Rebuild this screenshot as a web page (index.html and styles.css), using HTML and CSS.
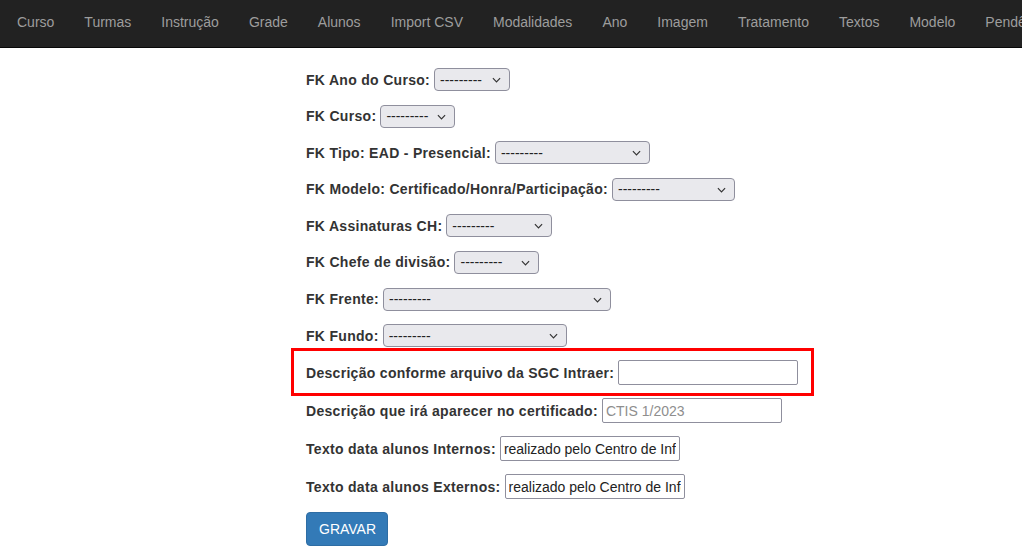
FILE: index.html
```html
<!DOCTYPE html>
<html lang="pt-BR">
<head>
<meta charset="utf-8">
<title>Cadastro</title>
<link rel="stylesheet" href="styles.css">
</head>
<body>
<nav class="navbar">
  <ul class="nav">
    <li><a href="#">Curso</a></li>
    <li><a href="#">Turmas</a></li>
    <li><a href="#">Instrução</a></li>
    <li><a href="#">Grade</a></li>
    <li><a href="#">Alunos</a></li>
    <li><a href="#">Import CSV</a></li>
    <li><a href="#">Modalidades</a></li>
    <li><a href="#">Ano</a></li>
    <li><a href="#">Imagem</a></li>
    <li><a href="#">Tratamento</a></li>
    <li><a href="#">Textos</a></li>
    <li><a href="#">Modelo</a></li>
    <li><a href="#">Pendências</a></li>
  </ul>
</nav>

<form class="form">
  <div class="row"><label>FK Ano do Curso:</label><span class="sel w76"><select><option>---------</option></select><svg class="chev" viewBox="0 0 10 6"><path d="M1 1 L5 5 L9 1"/></svg></span></div>
  <div class="row"><label>FK Curso:</label><span class="sel w75"><select><option>---------</option></select><svg class="chev" viewBox="0 0 10 6"><path d="M1 1 L5 5 L9 1"/></svg></span></div>
  <div class="row"><label>FK Tipo: EAD - Presencial:</label><span class="sel w155"><select><option>---------</option></select><svg class="chev" viewBox="0 0 10 6"><path d="M1 1 L5 5 L9 1"/></svg></span></div>
  <div class="row"><label>FK Modelo: Certificado/Honra/Participação:</label><span class="sel w123"><select><option>---------</option></select><svg class="chev" viewBox="0 0 10 6"><path d="M1 1 L5 5 L9 1"/></svg></span></div>
  <div class="row"><label>FK Assinaturas CH:</label><span class="sel w106"><select><option>---------</option></select><svg class="chev" viewBox="0 0 10 6"><path d="M1 1 L5 5 L9 1"/></svg></span></div>
  <div class="row"><label>FK Chefe de divisão:</label><span class="sel w85"><select><option>---------</option></select><svg class="chev" viewBox="0 0 10 6"><path d="M1 1 L5 5 L9 1"/></svg></span></div>
  <div class="row"><label>FK Frente:</label><span class="sel w228"><select><option>---------</option></select><svg class="chev" viewBox="0 0 10 6"><path d="M1 1 L5 5 L9 1"/></svg></span></div>
  <div class="row"><label>FK Fundo:</label><span class="sel w184"><select><option>---------</option></select><svg class="chev" viewBox="0 0 10 6"><path d="M1 1 L5 5 L9 1"/></svg></span></div>
  <div class="row trow highlight"><label>Descrição conforme arquivo da SGC Intraer:</label><input type="text" class="txt"></div>
  <div class="row trow"><label>Descrição que irá aparecer no certificado:</label><input type="text" class="txt" placeholder="CTIS 1/2023"></div>
  <div class="row trow"><label>Texto data alunos Internos:</label><input type="text" class="txt" value="realizado pelo Centro de Informática"></div>
  <div class="row trow"><label>Texto data alunos Externos:</label><input type="text" class="txt" value="realizado pelo Centro de Informática"></div>
  <div class="actions"><button type="button" class="btn">GRAVAR</button></div>
</form>
</body>
</html>
```

FILE: styles.css
```css
* { box-sizing: border-box; }
html, body { margin: 0; padding: 0; }
body {
  font-family: "Liberation Sans", Arial, Helvetica, sans-serif;
  font-size: 14px;
  line-height: 20px;
  color: #333;
  background: #fff;
  overflow: hidden;
}
.navbar {
  background: #222;
  border-bottom: 1px solid #080808;
  height: 48px;
  overflow: hidden;
}
.nav {
  list-style: none;
  margin: 0;
  padding: 0 0 0 2px;
  display: flex;
  white-space: nowrap;
}
.nav a {
  display: block;
  padding: 12px 15px;
  color: #9d9d9d;
  text-decoration: none;
  line-height: 20px;
}
.form {
  margin: 0;
  padding: 18px 0 0 306px;
}
.row {
  display: flex;
  align-items: center;
  gap: 4px;
  height: 27px;
  margin-bottom: 9.6px;
}
.trow { height: 28.4px; }
label {
  font-weight: bold;
  color: #333;
  white-space: nowrap;
  letter-spacing: 0.3px;
}
.sel {
  position: relative;
  display: inline-block;
  height: 23px;
}
.sel select {
  -webkit-appearance: none;
  appearance: none;
  width: 100%;
  height: 23px;
  margin: 0;
  padding: 0 20px 0 5px;
  font-family: inherit;
  font-size: 14px;
  color: #222;
  background: #e9e9ed;
  border: 1px solid #8f8f9d;
  border-radius: 4px;
}
.chev {
  position: absolute;
  right: 9px;
  top: 9px;
  width: 9px;
  height: 6px;
  fill: none;
  stroke: #333;
  stroke-width: 1.3;
}
.w76 { width: 76px; }
.w75 { width: 75px; }
.w155 { width: 155px; }
.w123 { width: 123px; }
.w106 { width: 106px; }
.w85 { width: 85px; }
.w228 { width: 228px; }
.w184 { width: 184px; }
.txt {
  width: 180px;
  height: 25px;
  margin: 0;
  padding: 1px 3px;
  font-family: inherit;
  font-size: 14px;
  color: #222;
  background: #fff;
  border: 1px solid #8f8f9d;
  border-radius: 2px;
}
.txt::placeholder { color: #8e8e8e; }
.highlight { position: relative; }
.highlight::before {
  content: "";
  position: absolute;
  left: -15px;
  top: -11px;
  width: 517px;
  height: 42px;
  border: 3px solid #f00;
  pointer-events: none;
}
.actions { padding-top: 1px; }
.btn {
  font-family: inherit;
  font-size: 14px;
  line-height: 20px;
  color: #fff;
  background: #337ab7;
  border: 1px solid #2e6da4;
  border-radius: 4px;
  padding: 6px 12px;
  width: 82px;
  height: 34px;
}
```
